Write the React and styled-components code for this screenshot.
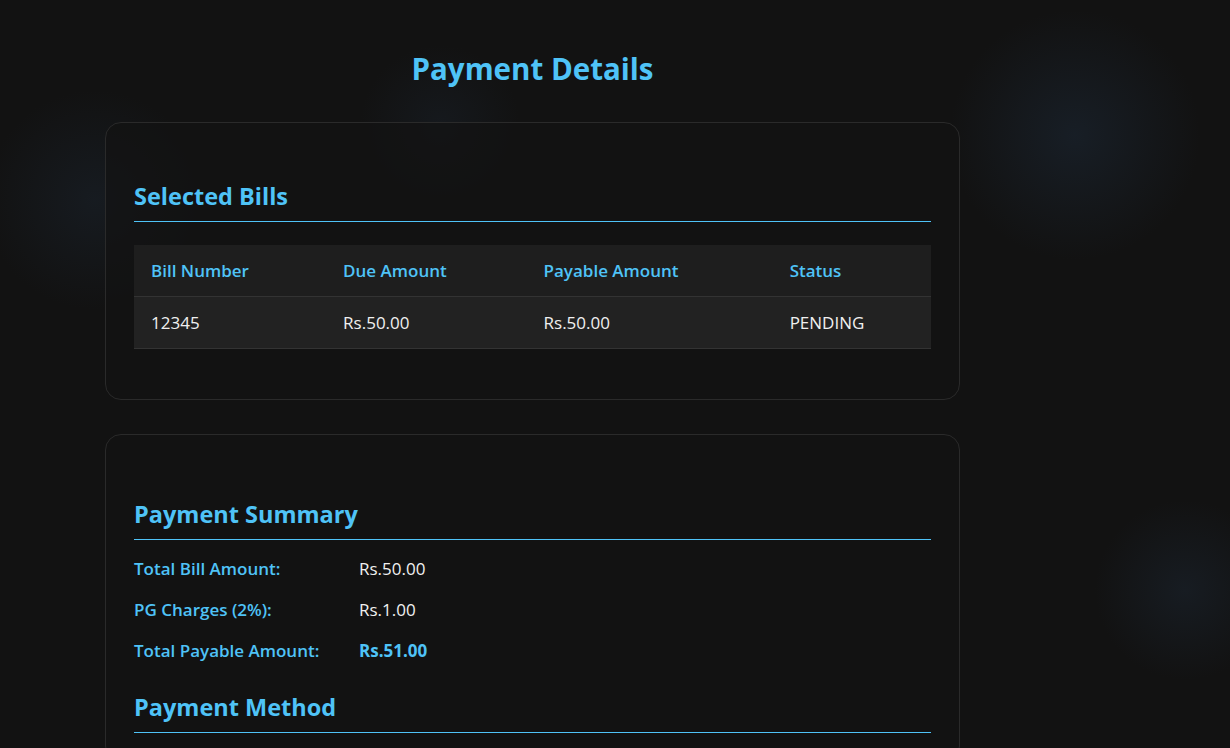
import React from 'react';
import styled, { createGlobalStyle } from 'styled-components';

const GlobalStyle = createGlobalStyle`
    html, body {
        margin: 0;
        padding: 0;
    }
    body {
        min-height: 100vh;
        background-color: #121212;
        background-image:
            radial-gradient(circle at 1075px 135px, rgba(28, 40, 54, 0.55), rgba(18, 18, 18, 0) 125px),
            radial-gradient(circle at 1185px 590px, rgba(28, 38, 50, 0.5), rgba(18, 18, 18, 0) 90px),
            radial-gradient(circle at 95px 200px, rgba(28, 38, 50, 0.45), rgba(18, 18, 18, 0) 110px),
            radial-gradient(circle at 440px 125px, rgba(28, 38, 50, 0.35), rgba(18, 18, 18, 0) 80px);
        background-repeat: no-repeat;
        color: #e6e6e6;
        font-family: "Open Sans", "Noto Sans", sans-serif;
    }
`;

const Page = styled.main`
    width: 855px;
    margin-left: 105px;
    padding-top: 51px;
`;

const Title = styled.h1`
    margin: 0 0 35px;
    font-size: 29.5px;
    line-height: 36px;
    font-weight: 700;
    color: #4fc3f7;
    text-align: center;
`;

const Card = styled.section`
    border: 1px solid #2a2a2a;
    border-radius: 16px;
    background: rgba(18, 18, 18, 0.7);
    padding: ${p => p.$top}px 28px 28px;
    margin-bottom: 34px;
`;

const SectionTitle = styled.h2`
    margin: ${p => p.$gap || 0}px 0 0;
    padding-bottom: 10px;
    border-bottom: 1px solid #4fc3f7;
    font-size: 23.5px;
    line-height: 29px;
    font-weight: 700;
    color: #4fc3f7;
`;

const Table = styled.table`
    width: 100%;
    margin: 23px 0 22px;
    border-collapse: collapse;
    font-size: 17px;
`;

const HeadCell = styled.th`
    text-align: left;
    padding: 16px 17px;
    line-height: 19px;
    font-weight: 600;
    color: #4fc3f7;
    background: #1e1e1e;
    border-bottom: 1px solid #333;
`;

const Cell = styled.td`
    padding: 16px 17px;
    line-height: 19px;
    color: #f0f0f0;
    background: #222;
    border-bottom: 1px solid #333;
`;

const Summary = styled.div`
    margin: 8px 0 22px;
`;

const SummaryRow = styled.div`
    display: grid;
    grid-template-columns: 225px 1fr;
    padding: 8px 0;
    line-height: 25px;
    font-size: 17px;
`;

const Label = styled.span`
    color: #4fc3f7;
    font-weight: 600;
`;

const Value = styled.span`
    color: ${p => (p.$total ? '#4fc3f7' : '#f0f0f0')};
    font-weight: ${p => (p.$total ? 700 : 400)};
`;

const bills = [
    { number: '12345', due: 'Rs.50.00', payable: 'Rs.50.00', status: 'PENDING' },
];

const summary = [
    { label: 'Total Bill Amount:', value: 'Rs.50.00' },
    { label: 'PG Charges (2%):', value: 'Rs.1.00' },
    { label: 'Total Payable Amount:', value: 'Rs.51.00', total: true },
];

export default function App() {
    return (
        <>
            <GlobalStyle />
            <Page>
                <Title>Payment Details</Title>
                <Card $top={28}>
                    <SectionTitle $gap={31}>Selected Bills</SectionTitle>
                    <Table>
                        <thead>
                            <tr>
                                <HeadCell>Bill Number</HeadCell>
                                <HeadCell>Due Amount</HeadCell>
                                <HeadCell>Payable Amount</HeadCell>
                                <HeadCell>Status</HeadCell>
                            </tr>
                        </thead>
                        <tbody>
                            {bills.map(b => (
                                <tr key={b.number}>
                                    <Cell>{b.number}</Cell>
                                    <Cell>{b.due}</Cell>
                                    <Cell>{b.payable}</Cell>
                                    <Cell>{b.status}</Cell>
                                </tr>
                            ))}
                        </tbody>
                    </Table>
                </Card>
                <Card $top={28}>
                    <SectionTitle $gap={37}>Payment Summary</SectionTitle>
                    <Summary>
                        {summary.map(s => (
                            <SummaryRow key={s.label}>
                                <Label>{s.label}</Label>
                                <Value $total={s.total}>{s.value}</Value>
                            </SummaryRow>
                        ))}
                    </Summary>
                    <SectionTitle>Payment Method</SectionTitle>
                </Card>
            </Page>
        </>
    );
}
